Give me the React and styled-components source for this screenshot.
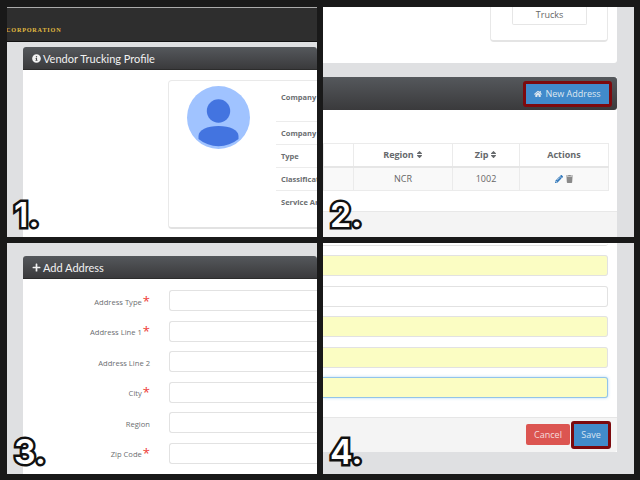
import React from 'react'
import styled, { createGlobalStyle } from 'styled-components'
import { FaInfoCircle, FaPlus, FaHome, FaPencilAlt, FaTrash, FaSort } from 'react-icons/fa'

const Global = createGlobalStyle`
  html, body { margin: 0; padding: 0; background: #191919; }
  body { width: 640px; height: 480px; overflow: hidden; font-family: "Open Sans", "Liberation Sans", sans-serif; }
  * { box-sizing: border-box; }
`

const Board = styled.div`
  width: 640px;
  height: 480px;
  padding: 7px 6px 6px 7px;
  display: grid;
  grid-template-columns: 310px 311px;
  grid-template-rows: 230px 231px;
  column-gap: 6px;
  row-gap: 6px;
  background: #191919;
`

const Shot = styled.div`
  position: relative;
  overflow: hidden;
  background: #dfe0e2;
`

const Step = styled.span`
  position: absolute;
  left: 7px;
  bottom: 5px;
  font: 600 34px/34px "Inter", "DejaVu Sans", sans-serif;
  color: #fff;
  -webkit-text-stroke: 5px #111;
  paint-order: stroke fill;
`

const TopBar = styled.div`
  height: 35px;
  background: #2e2e2e;
  border-top: 1px solid #aaa;
  border-bottom: 1px solid #111;
  display: flex;
  align-items: flex-end;
  padding-bottom: 7px;
`

const Logo = styled.span`
  margin-left: -1px;
  font: 700 6.2px/8px "Liberation Serif", serif;
  letter-spacing: 0.8px;
  color: #e2bc40;
`

const PanelWrap = styled.div`
  margin: ${p => p.$top}px 0 0 16px;
  width: 294px;
  background: #fff;
  border-radius: 3px;
`

const Heading = styled.div`
  height: 23px;
  display: flex;
  align-items: center;
  gap: 2px;
  padding-left: 9px;
  color: #f2f2f2;
  font: 11px "Lato", sans-serif;
  border-radius: 3px 3px 0 0;
  background: linear-gradient(#55585c, #3a3a3c);
  border-bottom: 1px solid #2c2c2c;
  svg { width: 9px; height: 9px; }
`

const ProfileBody = styled.div`
  padding: 10px 0 0 145px;
  height: 190px;
`

const ProfileCard = styled.div`
  width: 200px;
  height: 149px;
  background: #fff;
  border: 1px solid #e9e9e9;
  border-bottom: 2px solid #e2e2e2;
  border-radius: 4px;
  display: flex;
  padding: 5px 0 0 18px;
`

const Avatar = styled.svg`
  width: 63px;
  height: 63px;
  flex: none;
`

const InfoList = styled.div`
  margin-left: 26px;
  flex: 1;
  display: flex;
  flex-direction: column;
`

const InfoRow = styled.div`
  height: ${p => p.$h}px;
  padding: 3px 0 0 5px;
  font: 700 7.5px/16px "Open Sans", sans-serif;
  color: #6b6e71;
  white-space: nowrap;
  border-bottom: ${p => (p.$last ? 'none' : '1px solid #ececec')};
`

const TopCrop = styled.div`
  background: #fff;
  height: 56px;
  width: 294px;
  border-radius: 0 0 3px 0;
  padding-left: 167px;
`

const TruckCard = styled.div`
  width: 118px;
  height: 35px;
  border: 1px solid #e8e8e8;
  border-top: none;
  border-bottom: 2px solid #e4e4e4;
  border-radius: 0 0 4px 4px;
  padding-left: 21px;
`

const TruckTag = styled.div`
  width: 75px;
  height: 18px;
  border: 1px solid #e6e6e6;
  border-top: none;
  border-radius: 0 0 2px 2px;
  font-size: 9px;
  line-height: 15px;
  color: #666;
  text-align: center;
`

const AddressPanel = styled.div`
  margin-top: 14px;
  width: 294px;
  background: #fff;
`

const AddressBar = styled.div`
  height: 33px;
  background: linear-gradient(#55585c, #3a3a3c);
  display: flex;
  align-items: center;
  justify-content: flex-end;
  padding-right: 5px;
  border-radius: 0 3px 3px 0;
`

const NewButton = styled.button`
  width: 89px;
  height: 26px;
  background: #418acb;
  color: #dfe8f0;
  border: 3px solid #7c0a0e;
  border-radius: 3px;
  padding: 0;
  font: 9px/1 "Open Sans", sans-serif;
  display: flex;
  align-items: center;
  justify-content: center;
  gap: 3px;
  svg { width: 8px; height: 8px; }
`

const TableWrap = styled.div`
  padding: 33px 0 0 0;
  height: 102px;
  border-bottom: 1px solid #e8e8e8;
`

const Table = styled.table`
  width: 285px;
  border-collapse: collapse;
  table-layout: fixed;
  font-size: 9px;
  color: #666;
  th, td { border: 1px solid #ebebeb; text-align: center; padding: 0; }
  th { height: 23px; border-bottom: 2px solid #e6e6e6; font-weight: 700; color: #66696c; }
  td { height: 24px; background: #f9f9f9; }
  svg { vertical-align: -1px; }
`

const SortIcon = styled(FaSort)`
  width: 7px;
  height: 9px;
  margin-left: 2px;
`

const EditIcon = styled(FaPencilAlt)`
  width: 8px;
  height: 8px;
  color: #3178bb;
  margin-right: 3px;
`

const TrashIcon = styled(FaTrash)`
  width: 7px;
  height: 8px;
  color: #8a8a8a;
`

const BottomStrip = styled.div`
  height: 26px;
  width: 294px;
  background: #f4f4f4;
`

const FormBody = styled.div`
  display: flex;
  flex-direction: column;
  padding-top: 11px;
  height: 200px;
`

const FormRow = styled.div`
  display: flex;
  align-items: center;
  height: 21px;
  margin-bottom: 9.6px;
`

const FieldLabel = styled.label`
  width: 127px;
  padding-top: 2px;
  text-align: right;
  font-size: 7.6px;
  color: #6b6e71;
  white-space: nowrap;
`

const Star = styled.span`
  color: #ee3b36;
  font-size: 13px;
  line-height: 8px;
  margin-left: 1px;
  vertical-align: -1px;
`

const Field = styled.div`
  margin-left: 19px;
  flex: 1;
  height: 21px;
  background: #fff;
  border: 1px solid #e2e2e2;
  border-right: none;
  border-radius: 3px 0 0 3px;
`

const YellowForm = styled.div`
  width: 294px;
  background: #fff;
  display: flex;
  flex-direction: column;
`

const YellowField = styled.div`
  width: 285px;
  height: 21px;
  margin-bottom: 9.6px;
  background: ${p => (p.$plain ? '#fff' : '#fbfdc3')};
  border: 1px solid ${p => (p.$focus ? '#92c4ea' : '#e2e2e2')};
  border-left: none;
  border-radius: 0 3px 3px 0;
  box-shadow: ${p => (p.$focus ? '0 0 3px rgba(102, 175, 233, 0.5)' : 'none')};
`

const FieldStub = styled.div`
  width: 285px;
  height: 3px;
  margin-bottom: 9px;
  border-bottom: 1px solid #e2e2e2;
  border-radius: 0 0 3px 0;
`

const Footer = styled.div`
  margin-top: 9px;
  height: 35px;
  background: #f4f4f4;
  border-top: 1px solid #e6e6e6;
  border-radius: 0 0 3px 0;
  display: flex;
  justify-content: flex-end;
  align-items: center;
  padding-right: 6px;
`

const CancelButton = styled.button`
  width: 44px;
  height: 21px;
  background: #dc5551;
  border: none;
  border-radius: 2px;
  color: #f5dcdc;
  font: 9px/1 "Open Sans", sans-serif;
  padding: 0;
`

const SaveButton = styled.button`
  width: 40px;
  height: 28px;
  margin-left: 1px;
  background: #428bca;
  border: 3px solid #7c0a0e;
  border-radius: 3px;
  color: #d5e4f2;
  font: 9px/1 "Open Sans", sans-serif;
  padding: 0;
`

const addressFields = [
  { label: 'Address Type', req: true },
  { label: 'Address Line 1', req: true },
  { label: 'Address Line 2' },
  { label: 'City', req: true },
  { label: 'Region' },
  { label: 'Zip Code', req: true },
]

const infoRows = [
  { label: 'Company', h: 36 },
  { label: 'Company', h: 23 },
  { label: 'Type', h: 23 },
  { label: 'Classification', h: 23 },
  { label: 'Service Area', h: 24, last: true },
]

export default function App() {
  return (
    <Board>
      <Global />
      <Shot>
        <TopBar><Logo>CORPORATION</Logo></TopBar>
        <PanelWrap $top={5}>
          <Heading><FaInfoCircle /> Vendor Trucking Profile</Heading>
          <ProfileBody>
            <ProfileCard>
              <Avatar viewBox="0 0 63 63">
                <circle cx="31.5" cy="31.5" r="31.5" fill="#a0c3ff" />
                <circle cx="31.5" cy="25" r="11.7" fill="#4374e0" />
                <path d="M11.5 53 V50 C11.5 44 20 40 31.5 40 C43 40 51.5 44 51.5 50 V53 A31.5 31.5 0 0 1 11.5 53 Z" fill="#4374e0" />
              </Avatar>
              <InfoList>
                {infoRows.map((row, i) => (
                  <InfoRow key={i} $h={row.h} $last={row.last}>{row.label}</InfoRow>
                ))}
              </InfoList>
            </ProfileCard>
          </ProfileBody>
        </PanelWrap>
        <Step>1.</Step>
      </Shot>

      <Shot>
        <TopCrop>
          <TruckCard><TruckTag>Trucks</TruckTag></TruckCard>
        </TopCrop>
        <AddressPanel>
          <AddressBar>
            <NewButton><FaHome /> New Address</NewButton>
          </AddressBar>
          <TableWrap>
            <Table>
              <colgroup>
                <col style={{ width: 30 }} />
                <col style={{ width: 99 }} />
                <col style={{ width: 67 }} />
                <col style={{ width: 89 }} />
              </colgroup>
              <thead>
                <tr><th /><th>Region<SortIcon /></th><th>Zip<SortIcon /></th><th>Actions</th></tr>
              </thead>
              <tbody>
                <tr><td /><td>NCR</td><td>1002</td><td><EditIcon /><TrashIcon /></td></tr>
              </tbody>
            </Table>
          </TableWrap>
        </AddressPanel>
        <BottomStrip />
        <Step>2.</Step>
      </Shot>

      <Shot>
        <PanelWrap $top={13}>
          <Heading><FaPlus /> Add Address</Heading>
          <FormBody>
            {addressFields.map(f => (
              <FormRow key={f.label}>
                <FieldLabel>{f.label}{f.req && <Star>*</Star>}</FieldLabel>
                <Field />
              </FormRow>
            ))}
          </FormBody>
        </PanelWrap>
        <Step>3.</Step>
      </Shot>

      <Shot>
        <YellowForm>
          <FieldStub />
          <YellowField />
          <YellowField $plain />
          <YellowField />
          <YellowField />
          <YellowField $focus />
          <Footer>
            <CancelButton>Cancel</CancelButton>
            <SaveButton>Save</SaveButton>
          </Footer>
        </YellowForm>
        <Step>4.</Step>
      </Shot>
    </Board>
  )
}
